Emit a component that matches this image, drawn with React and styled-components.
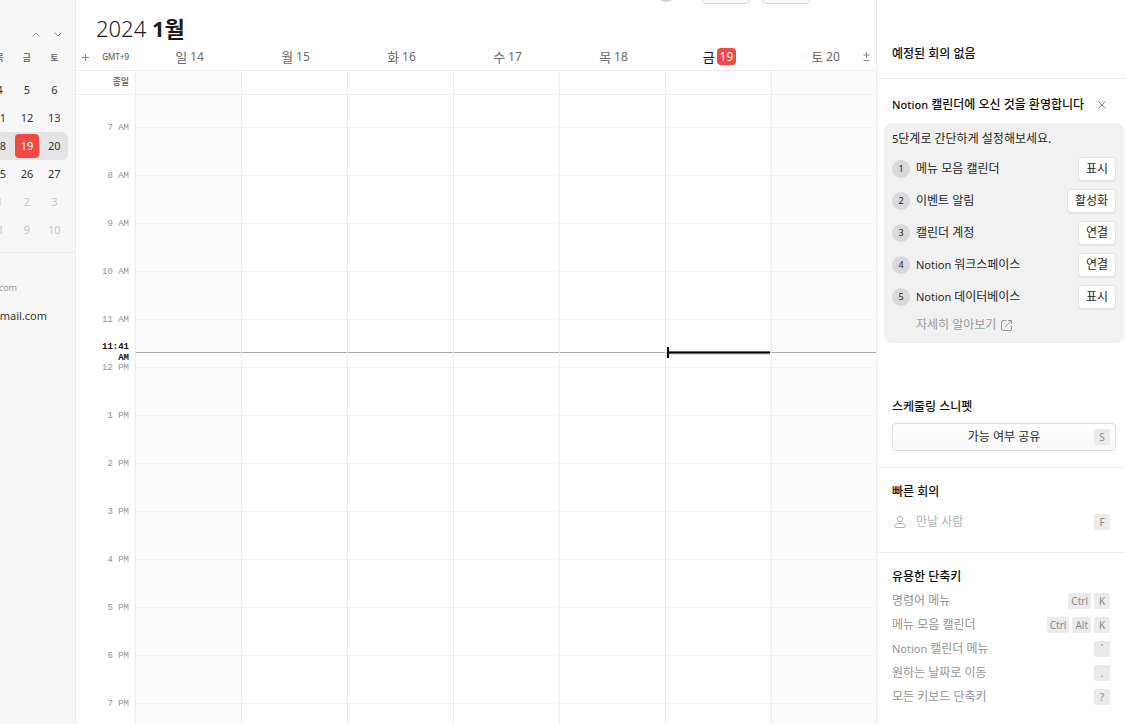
import styled, { createGlobalStyle } from "styled-components";

const weekdays = ["목", "금", "토"];

const weeks = [
  { id: 1, days: [4, 5, 6] },
  { id: 2, days: [11, 12, 13] },
  { id: 3, days: [18, 19, 20], current: true },
  { id: 4, days: [25, 26, 27] },
  { id: 5, days: [1, 2, 3], faded: true },
  { id: 6, days: [8, 9, 10], faded: true },
];

const days = [
  { name: "일", date: 14, weekend: true },
  { name: "월", date: 15 },
  { name: "화", date: 16 },
  { name: "수", date: 17 },
  { name: "목", date: 18 },
  { name: "금", date: 19, today: true },
  { name: "토", date: 20, weekend: true },
];

const hours = [
  "7 AM",
  "8 AM",
  "9 AM",
  "10 AM",
  "11 AM",
  "12 PM",
  "1 PM",
  "2 PM",
  "3 PM",
  "4 PM",
  "5 PM",
  "6 PM",
  "7 PM",
];

const steps = [
  { id: 1, text: "메뉴 모음 캘린더", action: "표시" },
  { id: 2, text: "이벤트 알림", action: "활성화" },
  { id: 3, text: "캘린더 계정", action: "연결" },
  { id: 4, latin: "Notion", text: "워크스페이스", action: "연결" },
  { id: 5, latin: "Notion", text: "데이터베이스", action: "표시" },
];

const shortcuts = [
  { text: "명령어 메뉴", keys: ["Ctrl", "K"] },
  { text: "메뉴 모음 캘린더", keys: ["Ctrl", "Alt", "K"] },
  { latin: "Notion", text: "캘린더 메뉴", keys: ["`"] },
  { text: "원하는 날짜로 이동", keys: ["."] },
  { text: "모든 키보드 단축키", keys: ["?"] },
];

export default function App() {
  return (
    <>
      <GlobalStyle />
      <Page>
        <Sidebar />
        <Calendar />
        <Panel />
      </Page>
    </>
  );
}

function Sidebar() {
  return (
    <Side>
      <MonthNav>
        <NavButton aria-label="이전 달">
          <svg width="8" height="5" viewBox="0 0 8 5">
            <path d="M0.5 4.5 4 1l3.5 3.5" />
          </svg>
        </NavButton>
        <NavButton aria-label="다음 달">
          <svg width="8" height="5" viewBox="0 0 8 5">
            <path d="M0.5 0.5 4 4l3.5-3.5" />
          </svg>
        </NavButton>
      </MonthNav>
      <MiniHead>
        {weekdays.map((day) => (
          <span key={day}>{day}</span>
        ))}
      </MiniHead>
      {weeks.map((week) => (
        <Week key={week.id} $current={week.current} $faded={week.faded}>
          {week.days.map((day) => (
            <MiniDay key={day} $today={week.current && day === 19}>
              {day}
            </MiniDay>
          ))}
        </Week>
      ))}
      <Accounts>
        <AccountGroup>com</AccountGroup>
        <Account>gmail.com</Account>
      </Accounts>
    </Side>
  );
}

function Calendar() {
  return (
    <Main>
      <TopBar>
        <Avatar />
        <TopButton aria-label="주" />
        <TopButton aria-label="오늘" />
      </TopBar>
      <Title>
        2024 <b>1월</b>
      </Title>
      <DayHeader>
        <Zone>
          <IconButton aria-label="시간대 추가">
            <svg width="7" height="7" viewBox="0 0 7 7">
              <path d="M3.5 0v7M0 3.5h7" />
            </svg>
          </IconButton>
          <ZoneName>GMT+9</ZoneName>
        </Zone>
        <DayNames>
          {days.map((day) => (
            <DayName key={day.date} $today={day.today}>
              {day.name}
              <DayNumber $today={day.today}>{day.date}</DayNumber>
            </DayName>
          ))}
          <Expand aria-label="모두 펼치기">
            <svg width="7" height="9" viewBox="0 0 7 9">
              <path d="M3.5 0v6M0.5 3h6M0.5 8.5h6" />
            </svg>
          </Expand>
        </DayNames>
      </DayHeader>
      <AllDay>
        <AllDayLabel>종일</AllDayLabel>
        <Columns>
          {days.map((day) => (
            <Column key={day.date} $weekend={day.weekend} />
          ))}
        </Columns>
      </AllDay>
      <TimeGrid>
        <Gutter>
          {hours.map((hour) => (
            <Hour key={hour}>{hour}</Hour>
          ))}
          <NowLabel>11:41 AM</NowLabel>
        </Gutter>
        <Columns>
          {days.map((day) => (
            <Column key={day.date} $weekend={day.weekend}>
              {hours.map((hour) => (
                <Slot key={hour} />
              ))}
              <NowLine $today={day.today} />
            </Column>
          ))}
        </Columns>
      </TimeGrid>
    </Main>
  );
}

function Panel() {
  return (
    <Aside>
      <Upcoming>
        <Heading>예정된 회의 없음</Heading>
      </Upcoming>
      <Welcome>
        <WelcomeHead>
          <Heading>
            <Latin>Notion</Latin> 캘린더에 오신 것을 환영합니다
          </Heading>
          <IconButton aria-label="닫기">
            <svg width="8" height="8" viewBox="0 0 8 8">
              <path d="M0.5 0.5l7 7M7.5 0.5l-7 7" />
            </svg>
          </IconButton>
        </WelcomeHead>
        <Card>
          <Intro>
            <Latin>5</Latin>단계로 간단하게 설정해보세요.
          </Intro>
          {steps.map((step) => (
            <Step key={step.id}>
              <StepNumber>{step.id}</StepNumber>
              <StepText>
                {step.latin && <Latin>{step.latin} </Latin>}
                {step.text}
              </StepText>
              <StepButton>{step.action}</StepButton>
            </Step>
          ))}
          <LearnMore href="#">
            자세히 알아보기
            <svg width="11" height="11" viewBox="0 0 11 11">
              <path d="M5.5 0.5H2a1.5 1.5 0 0 0-1.5 1.5v7A1.5 1.5 0 0 0 2 10.5h7A1.5 1.5 0 0 0 10.5 9V5.5M7 0.5h3.5V4M10.5 0.5L4 7" />
            </svg>
          </LearnMore>
        </Card>
      </Welcome>
      <Section>
        <Heading>스케줄링 스니펫</Heading>
        <ShareButton>
          <span>가능 여부 공유</span>
          <Key>S</Key>
        </ShareButton>
      </Section>
      <Section $divider>
        <Heading>빠른 회의</Heading>
        <MeetRow>
          <svg width="12" height="12" viewBox="0 0 12 12">
            <circle cx="6" cy="3.2" r="2.7" />
            <path d="M0.5 9.9C0.5 8.3 3 7.5 6 7.5s5.5 0.8 5.5 2.4c0 1-0.5 1.6-1.4 1.6H1.9c-0.9 0-1.4-0.6-1.4-1.6z" />
          </svg>
          <MeetInput placeholder="만날 사람" aria-label="만날 사람" />
          <Key>F</Key>
        </MeetRow>
      </Section>
      <Section $divider>
        <Heading>유용한 단축키</Heading>
        <ShortcutList>
          {shortcuts.map((item) => (
            <Shortcut key={item.text}>
              <span>
                {item.latin && <Latin>{item.latin} </Latin>}
                {item.text}
              </span>
              <Keys>
                {item.keys.map((key) => (
                  <Key key={key}>{key}</Key>
                ))}
              </Keys>
            </Shortcut>
          ))}
        </ShortcutList>
      </Section>
    </Aside>
  );
}

const GlobalStyle = createGlobalStyle`
  *, *::before, *::after {
    box-sizing: border-box;
  }
  body {
    margin: 0;
    background: #fff;
  }
  body, button, input {
    font-family: "Noto Sans", "Noto Sans CJK KR", sans-serif;
    font-size: 12px;
    line-height: 16px;
    color: #1f1f1f;
  }
  button {
    padding: 0;
    border: none;
    background: none;
  }
  svg {
    display: block;
    flex: none;
    fill: none;
    stroke: currentColor;
  }
`;

const Page = styled.div`
  display: grid;
  grid-template-columns: 76px 1fr 249px;
  height: 100vh;
  overflow: hidden;
`;

const Latin = styled.span`
  font-size: 11px;
`;

/* sidebar */

const Side = styled.aside`
  display: flex;
  flex-direction: column;
  align-items: flex-end;
  overflow: hidden;
  padding-top: 24px;
  background: #f7f7f7;
  border-right: 1px solid #ededed;
`;

const MonthNav = styled.div`
  display: flex;
  gap: 2px;
  padding-right: 7px;
`;

const NavButton = styled.button`
  display: grid;
  place-items: center;
  width: 20px;
  height: 20px;
  color: #8a8a8a;
`;

const MiniHead = styled.div`
  display: grid;
  grid-template-columns: repeat(3, 1fr);
  width: 82px;
  height: 28px;
  margin: 0 7px 4px 0;
  padding-top: 6px;
  font-size: 9px;
  font-weight: 500;
  text-align: center;
  color: #5a5a5a;
`;

const Week = styled.div`
  display: grid;
  flex: none;
  grid-template-columns: repeat(3, 1fr);
  place-items: center;
  width: 82px;
  height: 28px;
  margin-right: 7px;
  border-radius: 0 6px 6px 0;
  font-size: 11px;
  color: ${(props) => (props.$faded ? "#c4c4c4" : "#333")};
  background: ${(props) => (props.$current ? "#e4e4e4" : "none")};
`;

const MiniDay = styled.span`
  width: 24px;
  height: 24px;
  line-height: 24px;
  border-radius: 4px;
  text-align: center;
  color: ${(props) => (props.$today ? "#fff" : "inherit")};
  background: ${(props) => (props.$today ? "#f24843" : "none")};
`;

const Accounts = styled.div`
  display: flex;
  flex-direction: column;
  align-items: flex-end;
  width: 100%;
  margin-top: 8px;
  padding-top: 27px;
  border-top: 1px solid #e9e9e9;
`;

const AccountGroup = styled.span`
  padding-right: 58px;
  font-size: 9px;
  color: #999;
`;

const Account = styled.span`
  padding: 12px 28px 0 0;
  font-size: 11px;
  color: #333;
`;

/* calendar */

const Main = styled.main`
  display: flex;
  flex-direction: column;
  min-width: 0;
  overflow: hidden;
`;

const TopBar = styled.div`
  display: flex;
  flex: none;
  align-items: flex-end;
  justify-content: flex-end;
  gap: 12px;
  height: 4px;
  padding-right: 66px;
  overflow: hidden;
`;

const Avatar = styled.span`
  width: 20px;
  height: 20px;
  margin: 0 14px 2px 0;
  border-radius: 50%;
  background: #d6d2cc;
`;

const TopButton = styled.button`
  width: 48px;
  height: 24px;
  border: 1px solid #d9d9d9;
  border-radius: 4px;
  background: #fafafa;
`;

const Title = styled.h1`
  margin: 0;
  padding: 9px 0 1px 20px;
  font-size: 22px;
  font-weight: 300;
  line-height: 30px;
  color: #1a1a1a;
  b {
    font-weight: 700;
  }
`;

const DayHeader = styled.div`
  display: grid;
  flex: none;
  grid-template-columns: 59px 1fr;
  height: 27px;
  border-bottom: 1px solid #ededed;
`;

const Zone = styled.div`
  display: flex;
  align-items: center;
  justify-content: space-between;
  padding: 0 6px 0 1px;
`;

const IconButton = styled.button`
  display: grid;
  place-items: center;
  width: 16px;
  height: 16px;
  color: #8a8a8a;
`;

const ZoneName = styled.span`
  font-size: 8px;
  font-weight: 500;
  color: #666;
`;

const DayNames = styled.div`
  position: relative;
  display: grid;
  grid-template-columns: repeat(7, 1fr);
  margin-right: -1px;
`;

const DayName = styled.div`
  display: flex;
  align-items: center;
  justify-content: center;
  gap: ${(props) => (props.$today ? "2px" : "3px")};
  padding: 0 0 1px 3px;
  font-size: 13px;
  color: ${(props) => (props.$today ? "#111" : "#6b6b6b")};
`;

const DayNumber = styled.span`
  padding: ${(props) => (props.$today ? "0 3px" : "0")};
  border-radius: 4px;
  font-size: 12px;
  line-height: 17px;
  color: ${(props) => (props.$today ? "#fff" : "inherit")};
  background: ${(props) => (props.$today ? "#f24843" : "none")};
`;

const Expand = styled(IconButton)`
  position: absolute;
  top: 4px;
  right: 3px;
`;

const AllDay = styled.div`
  display: grid;
  flex: none;
  grid-template-columns: 59px 1fr;
  height: 24px;
  border-bottom: 1px solid #efefef;
`;

const AllDayLabel = styled.span`
  padding: 3px 6px 0 0;
  font-size: 9px;
  font-weight: 500;
  text-align: right;
  color: #555;
`;

const Columns = styled.div`
  display: grid;
  grid-template-columns: repeat(7, 1fr);
  margin-right: -1px;
`;

const Column = styled.div`
  position: relative;
  border-left: 1px solid #ededed;
  background: ${(props) => (props.$weekend ? "#fcfcfc" : "#fff")};
`;

const TimeGrid = styled.div`
  display: grid;
  flex: 1;
  grid-template-columns: 59px 1fr;
  min-height: 0;
`;

const Gutter = styled.div`
  position: relative;
  padding: 9px 6px 0 0;
  font-family: "Liberation Mono", monospace;
  font-size: 9px;
  text-align: right;
`;

const Hour = styled.div`
  height: 48px;
  line-height: 48px;
  color: #949494;
`;

const NowLabel = styled.div`
  position: absolute;
  top: 247px;
  right: 6px;
  width: 30px;
  font-weight: 700;
  line-height: 11px;
  color: #111;
`;

const Slot = styled.div`
  height: 48px;
  border-bottom: 1px solid #f4f4f4;
  &:first-child {
    height: 33px;
  }
`;

const NowLine = styled.div`
  position: absolute;
  top: 257px;
  left: 0;
  right: 0;
  height: 1px;
  background: #a8a8a8;
  &::before {
    content: "";
    display: ${(props) => (props.$today ? "block" : "none")};
    position: absolute;
    inset: -1px 1px auto 1px;
    height: 3px;
    border: solid #6a6a6a;
    border-width: 1px 0;
    background: #000;
    box-shadow: 0 1px 1px #0002;
  }
  &::after {
    content: "";
    display: ${(props) => (props.$today ? "block" : "none")};
    position: absolute;
    top: -5px;
    left: 1px;
    width: 2px;
    height: 11px;
    background: #000;
  }
`;

/* right panel */

const Aside = styled.aside`
  position: relative;
  display: flex;
  flex-direction: column;
  border-left: 1px solid #ededed;
  background: #fff;
`;

const Heading = styled.h2`
  margin: 0;
  font-size: 12px;
  font-weight: 500;
  line-height: 16px;
  color: #111;
`;

const Upcoming = styled.section`
  padding: 46px 16px 16px 15px;
  border-bottom: 1px solid #ededed;
`;

const Welcome = styled.section`
  padding: 18px 1px 0 7px;
`;

const WelcomeHead = styled.div`
  display: flex;
  align-items: center;
  justify-content: space-between;
  padding: 0 14px 10px 8px;
`;

const Card = styled.div`
  padding: 8px;
  border-radius: 8px;
  background: #f1f1f1;
`;

const Intro = styled.p`
  margin: 0 0 6px;
`;

const Step = styled.div`
  display: flex;
  align-items: center;
  gap: 6px;
  height: 32px;
`;

const StepNumber = styled.span`
  width: 18px;
  height: 18px;
  border-radius: 50%;
  font-size: 9px;
  line-height: 18px;
  text-align: center;
  background: #d9d9d9;
`;

const StepText = styled.span`
  flex: 1;
`;

const StepButton = styled.button`
  height: 24px;
  padding: 0 7px;
  border: 1px solid #e4e4e4;
  border-radius: 4px;
  background: #fff;
  box-shadow: 0 1px 1px #0000000f;
`;

const LearnMore = styled.a`
  display: flex;
  align-items: center;
  gap: 5px;
  padding: 4px 0 2px 24px;
  color: #999;
  text-decoration: none;
`;

const Section = styled.section`
  padding: ${(props) => (props.$divider ? "16px 9px 22px 15px" : "56px 9px 16px 15px")};
  border-top: ${(props) => (props.$divider ? "1px solid #ededed" : "none")};
`;

const Key = styled.kbd`
  min-width: 16px;
  height: 16px;
  padding: 0 3px;
  border-radius: 2px;
  font-family: inherit;
  font-size: 10px;
  line-height: 17px;
  text-align: center;
  color: #8a8a8a;
  background: #ebebeb;
`;

const ShareButton = styled.button`
  display: flex;
  align-items: center;
  width: 100%;
  height: 28px;
  margin-top: 8px;
  padding: 0 5px;
  border: 1px solid #dedede;
  border-radius: 4px;
  background: linear-gradient(#fff, #f8f8f8);
  span {
    flex: 1;
    padding-left: 16px;
  }
`;

const MeetRow = styled.div`
  display: flex;
  align-items: center;
  margin-top: 14px;
  padding: 0 6px 0 2px;
  color: #b0b0b0;
`;

const MeetInput = styled.input`
  flex: 1;
  min-width: 0;
  height: 16px;
  padding: 0 0 0 10px;
  border: none;
  outline: none;
  background: none;
  &::placeholder {
    color: #b0b0b0;
    opacity: 1;
  }
`;

const ShortcutList = styled.div`
  padding: 4px 6px 0 0;
`;

const Shortcut = styled.div`
  display: flex;
  align-items: center;
  justify-content: space-between;
  height: 24px;
  color: #949494;
`;

const Keys = styled.span`
  display: flex;
  gap: 3px;
`;
